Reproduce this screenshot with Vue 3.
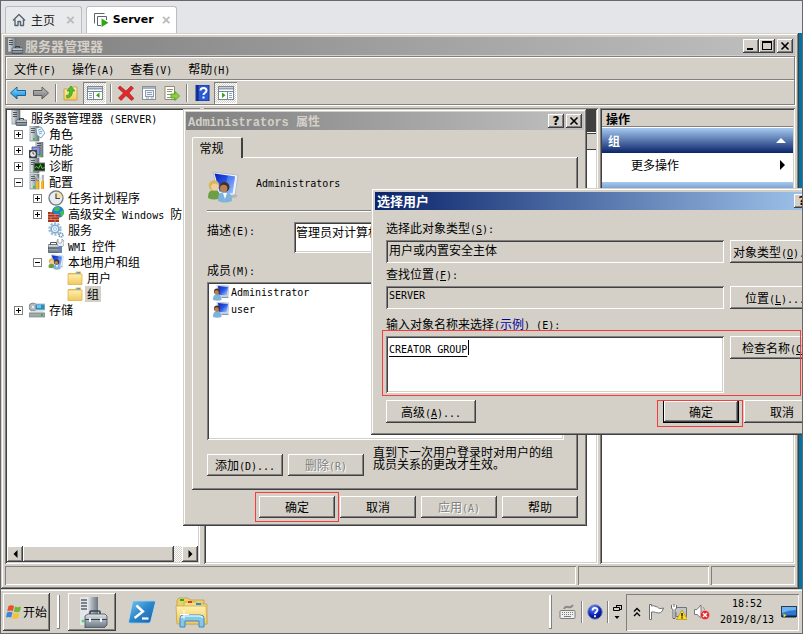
<script setup>
import { h } from 'vue'

// Splits a caption into CJK and Latin runs; "&X" marks the underlined access key.
function T({ s }) {
  const runs = s.match(/[^\x00-\x7F]+|[\x00-\x7F]+/g) || []
  return runs.map((run) => {
    if (run.charCodeAt(0) > 127) return run
    const i = run.indexOf('&')
    if (i < 0) return h('span', { class: 'lat' }, run)
    return h('span', { class: 'lat' }, [run.slice(0, i), h('u', run[i + 1]), run.slice(i + 2)])
  })
}
T.props = ['s']

function Ico({ n, w = 16, hgt }) {
  return h('svg', { class: 'ico', width: w, height: hgt || w, 'aria-hidden': 'true' }, [h('use', { href: '#' + n })])
}
Ico.props = ['n', 'w', 'hgt']

const menus = ['文件(F)', '操作(A)', '查看(V)', '帮助(H)']
const tools = [
  { n: 'back', t: '后退' },
  { n: 'fwd', t: '前进', end: true },
  { n: 'upfolder', t: '上一级' },
  { n: 'paneL', t: '显示树', on: true, end: true },
  { n: 'del', t: '删除' },
  { n: 'props', t: '属性' },
  { n: 'export', t: '导出', end: true },
  { n: 'helpbook', t: '帮助' },
  { n: 'paneR', t: '操作窗格', on: true },
]
const tree = [
  { l: 0, n: 'server', t: '服务器管理器 (SERVER)' },
  { l: 1, n: 'roles', t: '角色', e: '+' },
  { l: 1, n: 'features', t: '功能', e: '+' },
  { l: 1, n: 'diag', t: '诊断', e: '+' },
  { l: 1, n: 'config', t: '配置', e: '-' },
  { l: 2, n: 'clock', t: '任务计划程序', e: '+' },
  { l: 2, n: 'firewall', t: '高级安全 Windows 防火墙', e: '+' },
  { l: 2, n: 'gear', t: '服务' },
  { l: 2, n: 'wmi', t: 'WMI 控件' },
  { l: 2, n: 'users', t: '本地用户和组', e: '-' },
  { l: 3, n: 'folder', t: '用户' },
  { l: 3, n: 'folder', t: '组', sel: true },
  { l: 1, n: 'storage', t: '存储', e: '+' },
]
const members = ['Administrator', 'user']
</script>

<template>
  <div class="screen">
    <svg class="sprite" aria-hidden="true">
      <defs>
        <linearGradient id="gBlue" x1="0" y1="0" x2="1" y2="1"><stop offset="0" stop-color="#0a1fb4" /><stop offset=".5" stop-color="#2a58e8" /><stop offset="1" stop-color="#b8dcff" /></linearGradient>
        <linearGradient id="gArrow" x1="0" y1="0" x2="0" y2="1"><stop offset="0" stop-color="#8fdcff" /><stop offset="1" stop-color="#0a86d8" /></linearGradient>
        <linearGradient id="gGray" x1="0" y1="0" x2="0" y2="1"><stop offset="0" stop-color="#c4c4c4" /><stop offset="1" stop-color="#757575" /></linearGradient>
        <linearGradient id="gTower" x1="0" y1="0" x2="1" y2="0"><stop offset="0" stop-color="#eef1f3" /><stop offset=".45" stop-color="#aab2b8" /><stop offset="1" stop-color="#6b757d" /></linearGradient>
        <linearGradient id="gFold" x1="0" y1="0" x2="0" y2="1"><stop offset="0" stop-color="#fff0b0" /><stop offset="1" stop-color="#f0c95c" /></linearGradient>
        <linearGradient id="gBox" x1="0" y1="0" x2="0" y2="1"><stop offset="0" stop-color="#dfe5ea" /><stop offset="1" stop-color="#65737f" /></linearGradient>
        <linearGradient id="gPs" x1="0" y1="0" x2="1" y2="1"><stop offset="0" stop-color="#7cc4ec" /><stop offset=".5" stop-color="#2b86c8" /><stop offset="1" stop-color="#1a5fa4" /></linearGradient>
        <radialGradient id="gBall" cx=".4" cy=".25" r=".8"><stop offset="0" stop-color="#6a8cff" /><stop offset=".6" stop-color="#0a22b8" /><stop offset="1" stop-color="#020c60" /></radialGradient>
      </defs>
      <symbol id="tower" viewBox="0 0 16 16">
        <rect x="1" y="0" width="9" height="15" fill="url(#gTower)" stroke="#68727a" stroke-width=".6" />
        <path d="M2 2.5h4M2 4.5h4M2 6.5h4" stroke="#56616a" />
        <rect x="4" y="12" width="2" height="2" fill="#22d422" />
      </symbol>
      <symbol id="server" viewBox="0 0 16 16">
        <rect x="1" y="0" width="8" height="14" fill="url(#gTower)" stroke="#68727a" stroke-width=".6" />
        <path d="M2 2.5h4M2 4.5h4M2 6.5h4" stroke="#4a545c" />
        <path d="M8.500 10V8.500h4V10" fill="none" stroke="#34404a" />
        <rect x="5" y="10" width="11" height="5.500" rx="1" fill="url(#gBox)" stroke="#3c4954" stroke-width=".7" />
        <path d="M5 12.500h11" stroke="#2f3a44" stroke-width=".7" />
      </symbol>
      <symbol id="roles" viewBox="0 0 16 16">
        <use href="#tower" />
        <path d="M7 2l5-1 4 6-4 5-4-3z" fill="#f1f8fd" stroke="#6b8ba4" stroke-width=".8" />
        <path d="M9 4l3-1M9.500 6l4-1M10 8l3-1" stroke="#4f9bd0" stroke-width=".8" />
      </symbol>
      <symbol id="features" viewBox="0 0 16 16">
        <rect x="7" y="0" width="7" height="15" fill="url(#gTower)" stroke="#68727a" stroke-width=".6" />
        <path d="M8 1.500h4M8 3.500h4" stroke="#4a545c" />
        <path d="M3 5h8v8H3z" fill="#8894cf" stroke="#4c4c90" stroke-width=".8" />
        <rect x="0" y="8" width="8" height="8" fill="#3d4247" />
        <circle cx="4" cy="12" r="2.800" fill="#e8eaec" /><path d="M4 10v2h1.500" fill="none" stroke="#333" stroke-width=".8" />
        <rect x="11" y="12" width="2" height="2" fill="#22d422" />
      </symbol>
      <symbol id="diag" viewBox="0 0 16 16">
        <use href="#tower" />
        <rect x="5" y="5" width="11" height="8" fill="#20281e" stroke="#767d78" />
        <path d="M6 9.500l2-1 1.500 2 2-4 1.500 4 2.500-1" fill="none" stroke="#37e42c" />
      </symbol>
      <symbol id="config" viewBox="0 0 16 16">
        <use href="#tower" />
        <path d="M7 1l2 5M14 1l-3 6" stroke="#e4e8ea" stroke-width="2" />
        <path d="M8 1v5M14 1v6" stroke="#707a80" />
        <path d="M8.500 7v8M13.500 7v8" stroke="#e89a00" stroke-width="3" />
        <path d="M8 7v8M13 7v8" stroke="#ffd34c" />
      </symbol>
      <symbol id="clock" viewBox="0 0 16 16">
        <circle cx="8" cy="8" r="7" fill="#e9edf0" stroke="#7c8185" stroke-width="1.400" />
        <path d="M8 8V1.700A6.300 6.300 0 0 1 14.300 8z" fill="#f4dfa4" />
        <path d="M8 3.500V8.500h4" fill="none" stroke="#3a4a66" stroke-width="1.200" />
      </symbol>
      <symbol id="firewall" viewBox="0 0 16 16">
        <circle cx="10" cy="6" r="6" fill="#1f7fd0" />
        <path d="M7 1.500l4-1 1 3-3 2-3-1zM12 6l3.500-2 .5 4-3 3z" fill="#45c048" />
        <path d="M0 6h5l1 2h5v8H0z" fill="#a8321c" />
        <path d="M0 8.500h11M0 11h11M0 13.500h11M3 6v2.500M7 8.500V11M3 11v2.500M7 13.500V16" stroke="#e3a08c" stroke-width=".7" />
      </symbol>
      <symbol id="gear" viewBox="0 0 16 16">
        <circle cx="7" cy="7" r="5.500" fill="none" stroke="#9cbfe0" stroke-width="2.500" stroke-dasharray="2.200 1.250" />
        <circle cx="7" cy="7" r="3.800" fill="#eef6fc" stroke="#7ea9d2" stroke-width="1.500" />
        <circle cx="7" cy="7" r="1.500" fill="#fff" stroke="#7ea9d2" stroke-width=".7" />
        <circle cx="13" cy="13" r="2" fill="#eef6fc" stroke="#6e93b8" stroke-width="1.500" stroke-dasharray="1.300 .6" />
      </symbol>
      <symbol id="wmi" viewBox="0 0 16 16">
        <path d="M2.500 7V4.500h6V7" fill="none" stroke="#4b555e" />
        <rect x="0" y="6.500" width="13" height="8" rx="1" fill="url(#gBox)" stroke="#3b454e" stroke-width=".7" />
        <path d="M0 10h11" stroke="#2b3640" />
        <path d="M10 1v3l2 1.500L14 4V1l2 2v4l-2 2h-3L9 6V3z" fill="#eef1f3" stroke="#72797f" stroke-width=".6" />
        <path d="M12.500 8v7" stroke="#5f86bd" stroke-width="3" />
      </symbol>
      <symbol id="users" viewBox="0 0 32 32">
        <path d="M6 1l25 3-3 21-17-2z" fill="#eef2f8" stroke="#a9b3c2" stroke-width=".8" />
        <path d="M7.500 2.500L28 5.500l-2.500 17-13-2z" fill="url(#gBlue)" />
        <path d="M21 4.500L28 5.500l-2.500 17-9-1.500z" fill="#7fb0ff" opacity=".45" />
        <path d="M13 27h15l3-2-3-2z" fill="#a5abb5" opacity=".6" />
        <path d="M1 27c0-6 2-8 6-8s6 2 6 8q-6 3-12 0z" fill="#6da044" />
        <circle cx="7" cy="14.500" r="5.300" fill="#d7b757" /><circle cx="7.800" cy="16" r="3.600" fill="#f0cda2" />
        <path d="M11 30c0-7 2-9 7-9s7 2 7 9q-7 3-14 0z" fill="#7fb2dd" />
        <path d="M16 22l2 6 2-6z" fill="#fff" />
        <circle cx="17.500" cy="16" r="5" fill="#443024" /><circle cx="16.700" cy="17.500" r="3.700" fill="#b98054" />
      </symbol>
      <symbol id="user" viewBox="0 0 16 16">
        <path d="M4 0l12 1-1 11-10-1z" fill="#d6dfec" stroke="#9ea9bb" stroke-width=".5" />
        <path d="M5 1l10 1-1 8.500-8-.5z" fill="url(#gBlue)" />
        <path d="M8 12h7l1 1H9z" fill="#8e96a4" />
        <path d="M0 15c0-4 1-5.500 4-5.500S8.500 11 8.500 15q-4 1.500-8.500 0z" fill="#7fb2dd" />
        <circle cx="4" cy="6.500" r="3" fill="#4b3327" /><circle cx="3.600" cy="7.400" r="2.200" fill="#b98054" />
      </symbol>
      <symbol id="folder" viewBox="0 0 16 16">
        <path d="M1 3h7l1-1.500h5V14H1z" fill="#e4bb58" />
        <rect x="10" y="2" width="3" height="1.500" fill="#4aa0e8" />
        <path d="M1 4h14v10.500H1z" fill="url(#gFold)" stroke="#d9ab48" stroke-width=".7" />
      </symbol>
      <symbol id="storage" viewBox="0 0 16 16">
        <circle cx="4" cy="5" r="4" fill="#b3b8bb" stroke="#6d7376" stroke-width=".7" /><circle cx="4" cy="5" r="1.200" fill="#eee" />
        <rect x="6" y="2" width="10" height="6" fill="#2d8cc0" stroke="#b6c0c6" />
        <path d="M8 3h4v3H8z" fill="#6cc6ea" />
        <path d="M2 9h12l2 2H0z" fill="#dfe3e5" /><rect y="11" width="16" height="4" fill="#a2a9ad" stroke="#6b7276" stroke-width=".6" />
        <rect x="12" y="12" width="2" height="2" fill="#25c425" />
      </symbol>
      <symbol id="back" viewBox="0 0 16 16"><path d="M.5 8L7 2v3.500h8.500v5H7V14z" fill="url(#gArrow)" stroke="#16609e" /></symbol>
      <symbol id="fwd" viewBox="0 0 16 16"><path d="M15.500 8L9 2v3.500H.5v5H9V14z" fill="url(#gGray)" stroke="#5d5d5d" /></symbol>
      <symbol id="upfolder" viewBox="0 0 16 16">
        <path d="M1 4h6l1-2h6v13H1z" fill="url(#gFold)" stroke="#c29a3a" stroke-width=".8" />
        <path d="M3.500 10.500C6 10.500 6.500 8.500 6.500 6H4L8 1l4 5H9.500c0 4-2 7-5.500 7z" fill="#4fc128" stroke="#2b8a10" stroke-width=".6" />
      </symbol>
      <symbol id="paneL" viewBox="0 0 16 16">
        <rect x=".5" y="1.500" width="15" height="13" fill="#fff" stroke="#7c8794" />
        <path d="M1 3.500h14" stroke="#8fa0b2" stroke-width="2" /><path d="M1 6.500h14M6.500 7v7" stroke="#7c8794" />
        <path d="M2 8.500h3M2 10.500h3M2 12.500h3" stroke="#7da7cc" /><path d="M12.500 7.500v5.500L9 10.300z" fill="#2fa51c" />
      </symbol>
      <symbol id="paneR" viewBox="0 0 16 16">
        <rect x=".5" y="1.500" width="15" height="13" fill="#fff" stroke="#7c8794" />
        <path d="M1 3.500h14" stroke="#8fa0b2" stroke-width="2" /><path d="M1 6.500h14M9.500 7v7" stroke="#7c8794" />
        <path d="M11 8.500h3M11 10.500h3M11 12.500h3" stroke="#7da7cc" /><path d="M4 7.500v5.500l3.500-2.700z" fill="#2fa51c" />
      </symbol>
      <symbol id="del" viewBox="0 0 16 16"><path d="M2 1l6 5 5-5 2.500 2L11 8l5 5.500-2.500 2L8 10.500 3 15.500.5 13 5.500 8 0 3z" fill="#dd2a2a" stroke="#a81414" stroke-width=".6" /></symbol>
      <symbol id="props" viewBox="0 0 16 16">
        <rect x="1.500" y="1.500" width="13" height="13" fill="#fff" stroke="#8a9097" />
        <path d="M2 3h12" stroke="#a6b4c4" stroke-width="2" /><rect x="4.500" y="5.500" width="8" height="6" fill="#eef2f6" stroke="#8f9aa8" />
        <path d="M6 7.500h5M6 9.500h5M5 13h3M9.500 13h3" stroke="#8aa0b8" />
      </symbol>
      <symbol id="export" viewBox="0 0 16 16">
        <path d="M1 1.500h9.500v13H1z" fill="#fffef0" stroke="#8b8b7a" />
        <path d="M3 4.500h6M3 6.500h5M3 9.500h4M3 12.500h6" stroke="#8f8f8f" />
        <path d="M7 9h4V6.500l4.500 4.500-4.500 4.500V13H7z" fill="#86d43c" stroke="#4b9a16" stroke-width=".8" />
      </symbol>
      <symbol id="helpbook" viewBox="0 0 16 16">
        <rect x="2" y="0" width="13" height="16" fill="#2b59d8" stroke="#1a3690" /><path d="M3.500 0v16" stroke="#102a80" stroke-width="2" />
        <path d="M6.500 5.500c0-3.500 6-3.500 6 0 0 2.500-3 2-3 4.500M9.500 11.500v2" fill="none" stroke="#fff" stroke-width="2" />
      </symbol>
      <symbol id="home" viewBox="0 0 14 14"><path d="M1 7.500L7 1.500l6 6M3 6.500v6h3V8.500h2.500v4H11.500v-6" fill="none" stroke="#56646f" stroke-width="1.400" stroke-linejoin="round" /></symbol>
      <symbol id="vm" viewBox="0 0 16 16">
        <path d="M1.500 11.500v-10h10" fill="none" stroke="#5a666f" /><path d="M8 13.500H4.500v-9h9V8" fill="none" stroke="#5a666f" />
        <path d="M8.500 6.500v8.500l7-4.200z" fill="#2fa51c" />
      </symbol>
      <symbol id="winflag" viewBox="0 0 16 16">
        <path d="M2.500 2c2-1.200 4-1 5.500 0L6.800 7.200C5 6.200 3.200 6.400 1.300 7.300z" fill="#e8502a" />
        <path d="M9 2.500c2 1 4 1 6 0L13.800 7.600c-2 1-4 .8-6-.1z" fill="#72b830" />
        <path d="M1 8.500c2-1 3.800-1 5.500 0L5.200 13.600c-1.700-1-3.500-.9-5.200 0z" fill="#3b84dc" />
        <path d="M7.500 8.900c2 1 4 1 6 0L12.300 14c-2 1-4.200 1-6-.1z" fill="#f8c22c" />
      </symbol>
      <symbol id="srvbig" viewBox="0 0 32 32">
        <path d="M4 1h7v28H4z" fill="#e3e6e8" /><path d="M11 1h11v28H11z" fill="url(#gTower)" />
        <path d="M5 4h6M5 7h6M5 10h6M5 13h6" stroke="#59636b" stroke-width="1.600" /><circle cx="7" cy="25" r="1.500" fill="#4bd66e" />
        <path d="M14 19v-3q0-1 1-1h8q1 0 1 1v3" fill="none" stroke="#3a444d" stroke-width="1.600" />
        <path d="M9 20l3-2h17l2 2v9l-3 3H9z" fill="url(#gBox)" stroke="#424d57" stroke-width=".8" />
        <path d="M9 23.500h22" stroke="#37424c" /><path d="M14 22v4M25 22v4" stroke="#eef2f5" stroke-width="2" />
      </symbol>
      <symbol id="ps" viewBox="0 0 32 28">
        <path d="M7 2h22q2 0 1.500 2l-5 20q-.5 2-2.500 2H3q-2 0-1.500-2l4-20Q6 2 7 2z" fill="url(#gPs)" stroke="#b5ddf3" />
        <path d="M10 7l7 6.500L8 20.500" fill="none" stroke="#fff" stroke-width="2.600" /><path d="M16 21h7" stroke="#fff" stroke-width="2.400" />
      </symbol>
      <symbol id="explorer" viewBox="0 0 34 32">
        <path d="M2 4l2-2h9l2 2h14v22H2z" fill="#ecd06a" stroke="#b9923a" stroke-width=".7" />
        <rect x="5" y="3" width="4" height="2" fill="#1cb41c" /><path d="M9 6h12l2 2h9v20H9z" fill="#f5dd83" stroke="#c29d43" stroke-width=".7" />
        <rect x="13" y="5" width="4" height="2" fill="#d83c1c" /><rect x="21" y="7" width="5" height="2" fill="#2a8ae0" />
        <path d="M1 10h30l1 18H2z" fill="url(#gFold)" stroke="#c7a043" stroke-width=".7" />
        <path d="M5 31v-9q0-3 4-3h16q4 0 4 3v9h-5v-6H10v6z" fill="#86c6ea" stroke="#3d88b8" /><path d="M6 22q1-2 4-2h14q3 0 4 2" fill="none" stroke="#d6f0fc" stroke-width="1.500" />
        <path d="M9 14v9M5 18.500h9" stroke="#fff" />
      </symbol>
      <symbol id="kbd" viewBox="0 0 18 16">
        <path d="M5 5q1-3 4-2t5-2" fill="none" stroke="#8a8a8a" stroke-width="2" /><rect x="1" y="6.500" width="15" height="8" rx="1" fill="#eee" stroke="#7d7d7d" />
        <path d="M3 8.500h11M3 10.500h11" stroke="#7d7d7d" stroke-dasharray="1 1" /><path d="M5 12.500h7" stroke="#7d7d7d" />
      </symbol>
      <symbol id="helpball" viewBox="0 0 16 16">
        <circle cx="8" cy="8" r="7.300" fill="url(#gBall)" stroke="#8c98b8" />
        <path d="M5.500 6.500c0-3.500 5-3.300 5-.4C10.500 8 8 8 8 10M8 11.300v2" fill="none" stroke="#fff" stroke-width="1.800" />
      </symbol>
      <symbol id="restore" viewBox="0 0 10 16">
        <path d="M3.500 3V1.500h5v4H6.500M.5 3.500h6v3h-6zM3 1.500h6" fill="none" stroke="#000" /><path d="M1.500 12h5L4 15z" fill="#000" />
      </symbol>
      <symbol id="chev" viewBox="0 0 8 10"><path d="M1 4.500L4 1.500l3 3M1 9L4 6l3 3" fill="none" stroke="#000" stroke-width="1.400" /></symbol>
      <symbol id="flag" viewBox="0 0 16 16"><path d="M1.500 15.500v-15h2V2c3-1 4 1 6 1 1 1.500 3 2 6 1-1 3-2 5-5 5-2 0-4-1.500-7-1v7.500z" fill="#fff" stroke="#6f6f6f" /></symbol>
      <symbol id="net" viewBox="0 0 16 16">
        <path d="M6 3.500h9.500v9H5V8" fill="#c2c6c8" stroke="#6f7578" />
        <path d="M.5 1v3.500l1.500 1v9h2v-9l1.500-1V1M3 0v3" fill="#fff" stroke="#666" />
        <path d="M11 6l5.500 9.500h-11z" fill="#ffd92a" stroke="#b98f00" stroke-width=".7" /><path d="M11 9v3.500M11 13.300v1.200" stroke="#000" stroke-width="1.300" />
      </symbol>
      <symbol id="sound" viewBox="0 0 16 16">
        <path d="M.5 5.500h2.500l4-4.500v13L3 10.500H.5z" fill="#fff" stroke="#777" /><path d="M9 3q2 2 1.500 4" fill="none" stroke="#999" />
        <circle cx="11" cy="11" r="4.600" fill="#e02a2a" stroke="#f5b5b5" stroke-width=".6" /><path d="M9 9l4 4M13 9l-4 4" stroke="#fff" stroke-width="1.500" />
      </symbol>
      <symbol id="desk" viewBox="0 0 16 14">
        <rect x=".5" y="1.500" width="15" height="10" fill="#2c78cf" stroke="#2b3a55" /><path d="M1 2h14v3Q8 5 1 8z" fill="#6fb2f2" />
        <path d="M1 11.500h14" stroke="#10223c" stroke-width="2" /><path d="M2.500 8.500l3 2-3 2z" fill="#ffc82a" />
      </symbol>
    </svg>

    <nav class="tabs">
      <a class="vtab" href="#home"><Ico n="home" :w="14" /><span class="vt-name">主页</span><span class="vt-x">×</span></a>
      <a class="vtab active" href="#server"><Ico n="vm" /><b class="vt-latin">Server</b><span class="vt-x">×</span></a>
    </nav>

    <div class="desktop">
      <main class="window">
        <header class="caption inactive">
          <Ico n="server" /><h1>服务器管理器</h1>
          <button class="cb" aria-label="最小化"><svg width="10" height="10"><path d="M1 8h6" stroke="#000" stroke-width="2" /></svg></button>
          <button class="cb" aria-label="最大化"><svg width="10" height="10"><path d="M1 1h8" stroke="#000" stroke-width="2" /><rect x=".5" y=".5" width="9" height="8" fill="none" stroke="#000" /></svg></button>
          <button class="cb last" aria-label="关闭"><svg width="10" height="10"><path d="M1.500 1.500l7 7M8.500 1.500l-7 7" stroke="#000" stroke-width="1.600" /></svg></button>
        </header>
        <div class="bars">
          <nav class="menubar"><button v-for="m in menus" :key="m" class="menu"><T :s="m" /></button></nav>
          <div class="toolbar">
            <button v-for="t in tools" :key="t.n" :class="['tool', { on: t.on, end: t.end }]" :aria-label="t.t"><Ico :n="t.n" /></button>
          </div>
        </div>

        <div class="panes">
          <section class="pane tree-pane">
            <ul class="tree">
              <li v-for="(r, i) in tree" :key="i" :class="['row', 'l' + r.l]">
                <span v-if="r.l" class="slot"><button v-if="r.e" :class="['exp', { plus: r.e === '+' }]" :aria-label="r.t"></button></span>
                <Ico :n="r.n" /><span :class="['name', { sel: r.sel }]"><T :s="r.t" /></span>
              </li>
            </ul>
            <div class="hscroll">
              <button class="sb" aria-label="向左"><svg width="5" height="8"><path d="M4.500 0v8L.5 4z" /></svg></button>
              <div class="thumb"></div><div class="track"></div>
              <button class="sb" aria-label="向右"><svg width="5" height="8"><path d="M.5 0v8l4-4z" /></svg></button>
            </div>
          </section>
          <section class="pane mid-pane"><div class="dark"></div><div class="cols"></div></section>
          <aside class="pane act-pane">
            <h2>操作</h2>
            <div class="group"><b>组</b><svg width="10" height="5"><path d="M0 5h10L5 0z" fill="#fff" /></svg></div>
            <button class="more"><span>更多操作</span><svg width="5" height="10"><path d="M0 0v10l5-5z" /></svg></button>
            <div class="group next"></div>
          </aside>
        </div>

        <footer class="status"><span class="wide"></span><span class="mid"></span><span class="end"></span></footer>
      </main>
    </div>

    <footer class="taskbar">
      <button class="tb start"><Ico n="winflag" /><span>开始</span></button>
      <i class="sep tall"></i>
      <button class="tb app" aria-label="服务器管理器"><Ico n="srvbig" :w="32" /></button>
      <button class="quick" aria-label="PowerShell"><Ico n="ps" :w="30" :hgt="26" /></button>
      <button class="quick" aria-label="资源管理器"><Ico n="explorer" :w="34" :hgt="32" /></button>
      <i class="sep tall push"></i>
      <div class="lang">
        <Ico n="kbd" :w="18" :hgt="16" /><i class="sep"></i><Ico n="helpball" /><i class="sep"></i><Ico n="restore" :w="10" :hgt="16" />
      </div>
      <div class="tray">
        <Ico n="chev" :w="8" :hgt="10" /><Ico n="flag" /><Ico n="net" /><Ico n="sound" />
        <div class="clock"><span>18:52</span><span>2019/8/13</span></div>
        <Ico n="desk" :w="16" :hgt="14" />
      </div>
    </footer>

    <section class="dialog props" role="dialog" aria-label="Administrators 属性">
      <header class="caption inactive">
        <h2><T s="Administrators 属性" /></h2>
        <button class="cb" aria-label="帮助"><b>?</b></button>
        <button class="cb last" aria-label="关闭"><svg width="10" height="10"><path d="M1.500 1.500l7 7M8.500 1.500l-7 7" stroke="#000" stroke-width="1.600" /></svg></button>
      </header>
      <div class="sheet">
        <button class="tab">常规</button>
        <div class="page">
          <div class="who"><Ico n="users" :w="32" /><T s="Administrators" /></div>
          <hr />
          <div class="desc"><label for="desc"><T s="描述(E):" /></label><input id="desc" class="sunk" value="管理员对计算机/域有不受限制的完全访问权" /></div>
          <div class="lbl"><T s="成员(M):" /></div>
          <ul class="sunk members">
            <li v-for="m in members" :key="m"><Ico n="user" /><T :s="m" /></li>
          </ul>
          <div class="edit">
            <button class="btn"><T s="添加(D)..." /></button>
            <button class="btn" disabled><T s="删除(R)" /></button>
            <p>直到下一次用户登录时对用户的组成员关系的更改才生效。</p>
          </div>
        </div>
        <div class="foot">
          <span class="mark m1"><button class="btn">确定</button></span>
          <button class="btn">取消</button>
          <button class="btn" disabled><T s="应用(A)" /></button>
          <button class="btn">帮助</button>
        </div>
      </div>
    </section>

    <section class="dialog pick" role="dialog" aria-label="选择用户">
      <header class="caption">
        <h2>选择用户</h2>
        <button class="cb" aria-label="帮助"><b>?</b></button>
        <button class="cb last" aria-label="关闭"><svg width="10" height="10"><path d="M1.500 1.500l7 7M8.500 1.500l-7 7" stroke="#000" stroke-width="1.600" /></svg></button>
      </header>
      <form class="form" @submit.prevent>
        <label for="otype"><T s="选择此对象类型(&S):" /></label>
        <div class="line"><input id="otype" class="thin" readonly value="用户或内置安全主体" /><button class="btn wide"><T s="对象类型(&O)..." /></button></div>
        <label for="loc" class="near"><T s="查找位置(&F):" /></label>
        <div class="line"><input id="loc" class="thin latin" readonly value="SERVER" /><button class="btn wide"><T s="位置(&L)..." /></button></div>
        <div class="lbl far"><label for="names">输入对象名称来选择</label><T s="(" /><a href="#example">示例</a><T s=") (&E):" /></div>
        <div class="line mark m2"><div class="ta"><textarea id="names" class="sunk" spellcheck="false">CREATOR GROUP</textarea><i class="caret"></i></div><button class="btn wide"><T s="检查名称(&C)" /></button></div>
        <div class="line last-line"><button class="btn wide"><T s="高级(&A)..." /></button><span class="mark m3"><button class="btn def">确定</button></span><button class="btn">取消</button></div>
      </form>
    </section>
  </div>
</template>

<style>
body { margin: 0; }
.lat { font-family: "DejaVu Sans Mono", monospace; font-size: 10px; line-height: 12px; white-space: pre; }
.caption .lat { font-family: "Liberation Mono", monospace; font-size: 12px; }
.ico { flex: none; display: block; }
</style>

<style scoped>
.screen {
  --face: #d4d0c8;
  --up: inset -1px -1px #404040, inset 1px 1px #fff, inset -2px -2px #808080;
  --down: inset 1px 1px #808080, inset -1px -1px #fff, inset 2px 2px #404040, inset -2px -2px #d4d0c8;
  --thin: inset 1px 1px #808080, inset -1px -1px #fff;
  position: relative; display: flex; flex-direction: column; box-sizing: border-box; height: 100vh;
  overflow: hidden; border: 1px solid #68676c; background: #e4e5e9; color: #000;
  font: 12px/16px "Noto Sans CJK SC", sans-serif;
}
.screen * { box-sizing: border-box; }
.sprite { position: absolute; width: 0; height: 0; }
button, input, textarea { margin: 0; padding: 0; border: 0; border-radius: 0; background: none; color: inherit; font: inherit; outline: 0; }
h1, h2, p, ul { margin: 0; padding: 0; list-style: none; font-size: 12px; }

.tabs { display: flex; gap: 4px; height: 32px; flex: none; padding: 5px 4px 0; }
.vtab { display: flex; align-items: center; height: 27px; padding: 0 6px; border: 1px solid #bdbdc0; border-bottom: 0; border-radius: 3px 3px 0 0; color: #222; text-decoration: none; background: #e9eaec; }
.vtab.active { background: #fff; color: #000; }
.vt-name { margin: 0 11px 0 5px; }
.vt-latin { margin: 0 8px 0 4px; font: bold 11px/16px "DejaVu Sans", sans-serif; }
.vt-x { color: #bbb; font: bold 15px/16px "Liberation Sans", sans-serif; }

.desktop { flex: 1; min-height: 0; display: flex; padding-right: 3px; background: #0075a5; }
.window { flex: 1; min-width: 0; display: flex; flex-direction: column; padding: 4px; background: var(--face); box-shadow: inset -1px -1px #404040, inset 1px 1px #d4d0c8, inset -2px -2px #808080, inset 2px 2px #fff; }
.caption { display: flex; align-items: center; height: 18px; flex: none; padding: 0 2px; color: #fff; background: linear-gradient(90deg, #0a246a, #a6caf0); }
.caption.inactive { color: var(--face); background: linear-gradient(90deg, #808080, #c0c0c0); }
.caption h1 { flex: 1; margin-left: 2px; font-size: 13px; }
.caption h2 { flex: 1; font-size: 12px; font-weight: bold; }
.pick .caption h2 { font-size: 13px; }
.cb { display: flex; align-items: center; justify-content: center; width: 16px; height: 14px; background: var(--face); box-shadow: var(--up); color: #000; }
.cb b { font: bold 12px/14px "DejaVu Sans", sans-serif; }
.cb.last { margin-left: 2px; }

.bars { margin-top: 1px; border: 1px solid #808080; box-shadow: inset 1px 1px #fff, 1px 1px #fff; }
.menubar { display: flex; gap: 16px; height: 23px; padding: 2px 8px 0; border-bottom: 1px solid #808080; }
.menu { display: block; }
.toolbar { display: flex; align-items: center; gap: 2px; height: 24px; padding: 0 1px; border-top: 1px solid #fff; }
.tool { position: relative; display: flex; align-items: center; justify-content: center; width: 21px; height: 22px; }
.tool.end { margin-right: 7px; }
.tool.end::after { content: ""; position: absolute; right: -6px; top: 2px; width: 2px; height: 18px; background: linear-gradient(90deg, #808080 50%, #fff 50%); }
.tool.on { width: 23px; background: repeating-conic-gradient(#fff 0 25%, #d4d0c8 0 50%) 0 0 / 2px 2px; box-shadow: var(--thin); }

.panes { flex: 1; min-height: 0; display: flex; gap: 4px; margin-top: 3px; }
.pane { display: flex; flex-direction: column; padding: 2px; background: #fff; box-shadow: var(--down); overflow: hidden; }
.tree-pane { width: 195px; flex: none; }
.mid-pane { flex: 1; min-width: 0; }
.act-pane { width: 195px; flex: none; margin-left: -2px; }
.tree { flex: 1; min-height: 0; overflow: hidden; }
.row { display: flex; align-items: center; height: 16px; white-space: nowrap; }
.l0 { padding-left: 4px; }
.l1 { padding-left: 7px; }
.l2 { padding-left: 26px; }
.l3 { padding-left: 45px; }
.slot { width: 15px; height: 9px; flex: none; }
.exp { display: block; width: 9px; height: 9px; border: 1px solid #808080; background: linear-gradient(#000, #000) 1px 3px / 5px 1px no-repeat #fff; }
.exp.plus { background: linear-gradient(#000, #000) 1px 3px / 5px 1px no-repeat, linear-gradient(#000, #000) 3px 1px / 1px 5px no-repeat #fff; }
.name { margin-left: 3px; padding: 0 1px; }
.name.sel { margin-left: 2px; padding: 0 2px; background: var(--face); }
.hscroll { display: flex; height: 16px; flex: none; }
.sb { display: flex; align-items: center; justify-content: center; width: 16px; background: var(--face); box-shadow: var(--up); }
.thumb { flex: 1; background: var(--face); box-shadow: var(--up); }
.track { width: 8px; background: repeating-conic-gradient(#fff 0 25%, #d4d0c8 0 50%) 0 0 / 2px 2px; }
.dark { height: 22px; background: #404040; }
.cols { height: 17px; margin-top: 1px; border-top: 1px solid #404040; border-bottom: 1px solid #404040; background: var(--face); }
.act-pane h2 { height: 17px; padding-left: 4px; line-height: 17px; font-weight: bold; background: var(--face); border-bottom: 1px solid #808080; }
.group { display: flex; align-items: center; justify-content: space-between; height: 25px; flex: none; margin-top: 1px; padding: 0 7px 0 6px; color: #fff; background: linear-gradient(#a6caf0, #0a246a); }
.more { display: flex; align-items: center; justify-content: space-between; height: 28px; padding: 0 8px 4px 29px; }
.status { display: flex; gap: 2px; height: 19px; flex: none; margin-top: 2px; }
.status span { box-shadow: var(--thin); }
.status .wide { flex: 1; }
.status .mid { width: 131px; }
.status .end { width: 84px; }

.taskbar { display: flex; align-items: center; height: 44px; flex: none; padding: 2px 3px 0 2px; background: var(--face); box-shadow: inset 0 1px #d4d0c8, inset 0 2px #fff; }
.tb { display: flex; align-items: center; justify-content: center; height: 38px; background: var(--face); box-shadow: var(--up); }
.start { width: 47px; }
.start span { margin-left: 1px; }
.app { width: 48px; margin: 0 7px 0 8px; }
.quick { width: 38px; height: 38px; display: flex; align-items: center; justify-content: center; margin-right: 12px; }
.sep { width: 2px; height: 22px; flex: none; background: linear-gradient(90deg, #808080 50%, #fff 50%); }
.sep.tall { width: 3px; height: 34px; margin-left: 7px; background: #fff; box-shadow: inset -1px -1px #808080; }
.sep.push { margin-left: auto; margin-right: 7px; }
.lang { display: flex; align-items: center; gap: 4px; margin-right: 3px; }
.tray { display: flex; align-items: center; gap: 7px; height: 37px; padding: 0 2px 0 7px; box-shadow: var(--thin); }
.clock { width: 54px; margin-left: 3px; display: flex; flex-direction: column; align-items: center; font: 10px/16px "DejaVu Sans Mono", monospace; }

.dialog { position: absolute; padding: 3px; background: var(--face); box-shadow: inset -1px -1px #404040, inset 1px 1px #d4d0c8, inset -2px -2px #808080, inset 2px 2px #fff; }
.props { left: 182px; top: 108px; width: 404px; }
.pick { left: 370px; top: 187px; width: 463px; padding: 4px; }
.sheet { padding: 7px 6px 5px; }
.tab { display: block; position: relative; width: 51px; height: 21px; margin-bottom: -1px; padding-right: 11px; background: var(--face); border: 1px solid #fff; border-bottom: 0; border-right: 2px solid #404040; border-radius: 2px 2px 0 0; }
.page { padding: 14px 14px 14px 15px; box-shadow: var(--up); }
.who { display: flex; align-items: center; gap: 17px; height: 32px; }
.who :deep(.lat) { margin-bottom: 6px; }
.page hr { height: 2px; margin: 7px 0 10px; border: 0; border-top: 1px solid #808080; background: #fff; }
.desc { display: flex; height: 31px; }
.desc label { width: 87px; flex: none; }
.desc input { flex: 1; min-width: 0; padding: 0 2px 12px; }
.sunk { background: #fff; box-shadow: var(--down); }
.lbl { height: 16px; }
.page .lbl { margin: 9px 0 4px; }
.members { height: 158px; padding: 2px 6px; }
.members li { display: flex; align-items: center; gap: 2px; height: 17px; }
.edit { display: flex; gap: 5px; margin-top: 6px; }
.edit .btn { margin-top: 8px; }
.edit p { flex: 1; margin: 0 4px; line-height: 12px; }
.btn { width: 76px; height: 22px; flex: none; white-space: nowrap; background: var(--face); box-shadow: var(--up); line-height: 20px; }
.btn:disabled { color: #808080; text-shadow: 1px 1px #fff; }
.foot { display: flex; justify-content: flex-end; gap: 5px; margin-top: 6px; }
.mark { position: relative; }
.mark::after { content: ""; position: absolute; border: 1px solid #f43c3c; pointer-events: none; }
.m1 { display: flex; }
.m1::after { inset: -4px; }
.m2::after { inset: -6px 19px -3px -4px; }
.m3 { display: flex; margin-left: auto; }
.m3::after { inset: 0 -4px -4px -6px; }

.form { padding: 10px 10px 8px 11px; }
.form > label { display: block; height: 16px; margin-bottom: 4px; }
.form > .near { margin-top: 3px; }
.form > .far { margin: 7px 0 4px; }
.form a { color: #00009c; text-decoration: underline; text-underline-offset: 1px; }
.line { display: flex; gap: 6px; }
.line input { flex: 1; min-width: 0; height: 23px; padding: 0 3px 4px; background: var(--face); }
.thin { box-shadow: inset 1px 1px #808080, inset -1px -1px #fff, inset 2px 2px #404040; }
.thin.latin { font: 10px/16px "DejaVu Sans Mono", monospace; }
.line .btn { height: 23px; }
.line .wide { width: 90px; }
.ta { position: relative; flex: 1; height: 57px; }
.ta textarea { display: block; width: 100%; height: 100%; padding: 6px 3px; resize: none; font: 10px/16px "DejaVu Sans Mono", monospace; text-decoration: underline; text-underline-offset: 3px; }
.caret { position: absolute; left: 82px; top: 4px; width: 1px; height: 15px; background: #000; }
.last-line { gap: 5px; margin-top: 7px; }
.def { box-shadow: inset 0 0 0 1px #000, inset -2px -2px #404040, inset 2px 2px #fff, inset -3px -3px #808080; }
</style>
